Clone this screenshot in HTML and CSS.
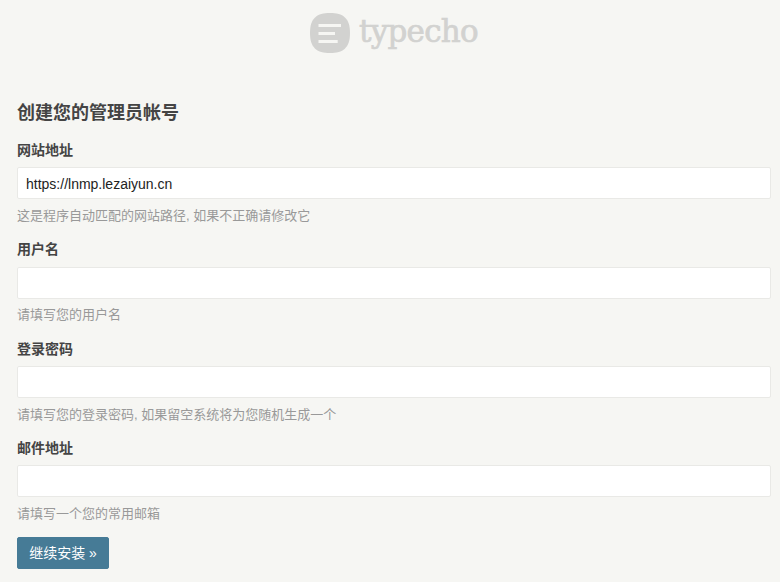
FILE: index.html
```html
<!DOCTYPE html>
<html lang="zh-CN">
<head>
<meta charset="utf-8">
<title>Typecho</title>
<link rel="stylesheet" href="styles.css">
</head>
<body>
<header class="brand">
  <svg class="brand-icon" viewBox="0 0 40 40" width="40" height="40" aria-hidden="true">
    <path class="brand-shape" d="M20 0C33 0 40 5 40 20C40 35 33 40 20 40C7 40 0 35 0 20C0 5 7 0 20 0Z"/>
    <rect class="brand-bar" x="8.5" y="11" width="22.5" height="3"/>
    <rect class="brand-bar" x="8.5" y="19" width="16.5" height="3"/>
    <rect class="brand-bar" x="8.5" y="27" width="19.2" height="3"/>
  </svg>
  <span class="brand-name">typecho</span>
</header>
<main class="page">
  <h1 class="title">创建您的管理员帐号</h1>
  <form class="form">
    <div class="field">
      <label class="label" for="url">网站地址</label>
      <input class="input" id="url" type="text" value="https://lnmp.lezaiyun.cn">
      <p class="hint">这是程序自动匹配的网站路径, 如果不正确请修改它</p>
    </div>
    <div class="field">
      <label class="label" for="user">用户名</label>
      <input class="input" id="user" type="text">
      <p class="hint">请填写您的用户名</p>
    </div>
    <div class="field">
      <label class="label" for="pass">登录密码</label>
      <input class="input" id="pass" type="text">
      <p class="hint">请填写您的登录密码, 如果留空系统将为您随机生成一个</p>
    </div>
    <div class="field">
      <label class="label" for="mail">邮件地址</label>
      <input class="input" id="mail" type="text">
      <p class="hint">请填写一个您的常用邮箱</p>
    </div>
    <button class="submit" type="button">继续安装 »</button>
  </form>
</main>
</body>
</html>
```
FILE: styles.css
```css
* { box-sizing: border-box; }
html, body { margin: 0; padding: 0; }
body {
  height: 582px;
  overflow: hidden;
  background: #f6f6f3;
  color: #444;
  font: 14px/21px "Liberation Sans", "Noto Sans CJK SC", sans-serif;
}
.brand {
  display: flex;
  align-items: center;
  justify-content: center;
  gap: 9px;
  height: 66px;
  padding-left: 8px;
}
.brand-icon { flex: none; }
.brand-shape { fill: #d2d2d0; }
.brand-bar { fill: #f6f6f3; }
.brand-name {
  margin-top: -4px;
  font: 31px/40px "DejaVu Serif", serif;
  letter-spacing: -0.75px;
  color: #d2d2d0;
  -webkit-text-stroke: 0.7px #d2d2d0;
}
.page { padding: 0 9px 0 17px; }
.title {
  margin: 0;
  padding-top: 34px;
  font-size: 18px;
  line-height: 27px;
  font-weight: bold;
}
.form { margin-top: 13px; }
.field { height: 99.33px; }
.label {
  display: block;
  height: 27.4px;
  font-weight: bold;
}
.input {
  display: block;
  width: 100%;
  height: 32px;
  padding: 1px 8px 0;
  border: 1px solid #e9e9e6;
  border-radius: 2px;
  background: #fff;
  color: #222;
  font: 14px "Liberation Sans", "Noto Sans CJK SC", sans-serif;
  outline: none;
}
.hint {
  margin: 6.6px 0 0;
  font-size: 13px;
  line-height: 19px;
  color: #999;
}
.submit {
  display: block;
  width: 92px;
  height: 32px;
  margin-top: 0;
  padding: 0 0 2px;
  border: 1px solid #467b96;
  border-radius: 2px;
  background: #467b96;
  color: #fff;
  font: 14px "Liberation Sans", "Noto Sans CJK SC", sans-serif;
}
```
